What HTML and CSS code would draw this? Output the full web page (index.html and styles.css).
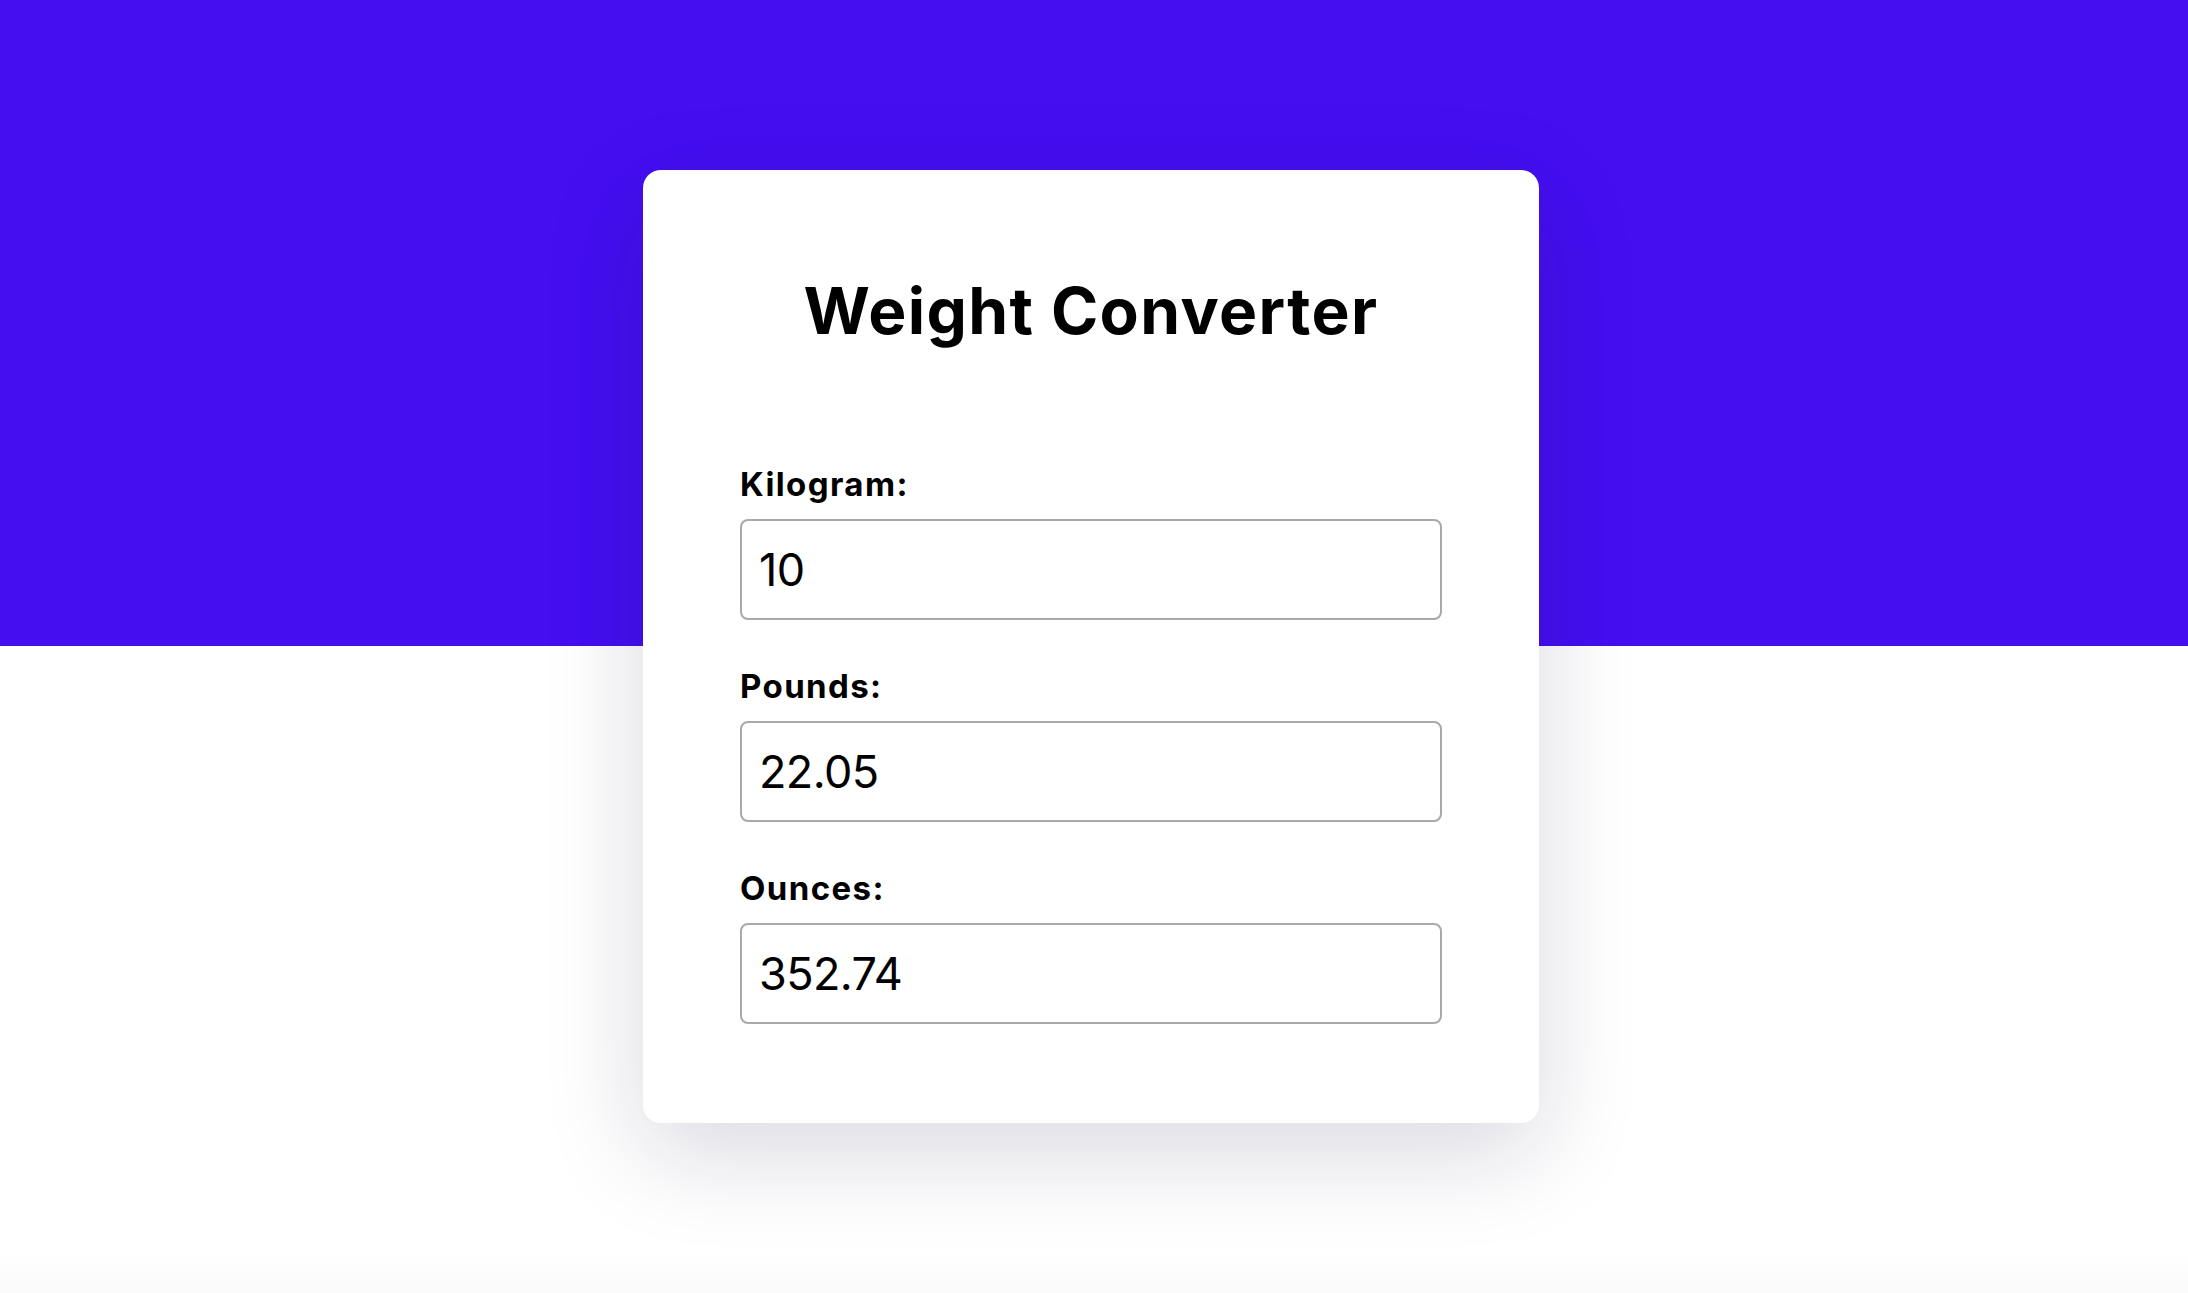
FILE: index.html
```html
<!DOCTYPE html>
<html lang="en">
<head>
<meta charset="utf-8">
<title>Weight Converter</title>
<link rel="stylesheet" href="styles.css">
</head>
<body>
<main class="page">
  <section class="card">
    <h1 class="title">Weight Converter</h1>
    <form class="form">
      <div class="field">
        <label class="label" for="kg">Kilogram:</label>
        <input class="input" id="kg" type="text" value="10">
      </div>
      <div class="field">
        <label class="label" for="lb">Pounds:</label>
        <input class="input" id="lb" type="text" value="22.05">
      </div>
      <div class="field">
        <label class="label" for="oz">Ounces:</label>
        <input class="input" id="oz" type="text" value="352.74">
      </div>
    </form>
  </section>
</main>
</body>
</html>
```

FILE: styles.css
```css
* { box-sizing: border-box; }
html, body { margin: 0; padding: 0; }
body {
  font-family: Inter, "Noto Sans", sans-serif;
  color: #000;
  background: #fff;
}
.page {
  min-height: 1293px;
  display: flex;
  flex-direction: column;
  align-items: center;
  padding-top: 170px;
  padding-right: 6px;
  background:
    linear-gradient(to bottom, #440ef0 0, #440ef0 646px, transparent 646px),
    linear-gradient(to bottom, #fff 0, #fff 1250px, #fafafa 1293px);
}
.card {
  width: 896px;
  height: 953px;
  background: #fff;
  border-radius: 18px;
  padding: 0 97px;
  box-shadow: 0 30px 100px rgba(20, 20, 60, 0.16);
}
.title {
  margin: 0;
  padding-top: 101px;
  text-align: center;
  font-size: 64px;
  line-height: 80px;
  font-weight: 700;
  letter-spacing: 1.4px;
}
.form {
  display: flex;
  flex-direction: column;
  gap: 46px;
  margin-top: 113px;
}
.field {
  display: flex;
  flex-direction: column;
  gap: 15px;
}
.label {
  font-size: 33px;
  line-height: 40px;
  font-weight: 700;
  letter-spacing: 1.4px;
}
.input {
  width: 100%;
  height: 101px;
  border: 2px solid #a9a9a9;
  border-radius: 8px;
  padding: 0 17px;
  font-family: Inter, "Noto Sans", sans-serif;
  font-size: 45px;
  letter-spacing: -0.6px;
  color: #000;
  background: #fff;
  outline: none;
}
```
